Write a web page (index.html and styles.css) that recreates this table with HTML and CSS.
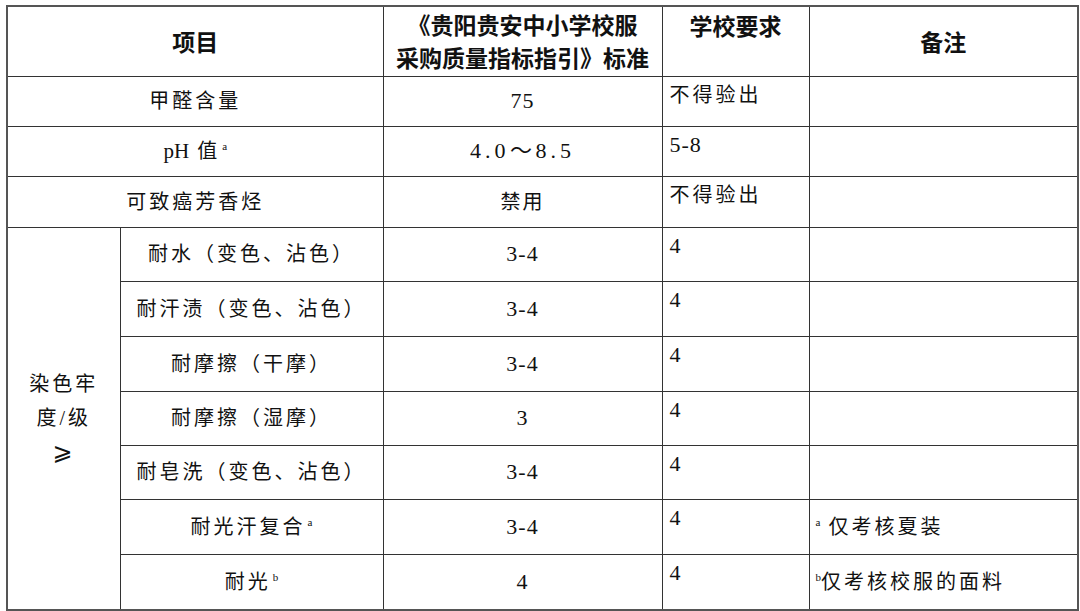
FILE: index.html
```html
<!DOCTYPE html>
<html lang="zh-CN">
<head>
<meta charset="utf-8">
<title>校服采购质量指标</title>
<link rel="stylesheet" href="styles.css">
</head>
<body>
<div class="page">
<table class="spec">
  <colgroup>
    <col class="c-a"><col class="c-b"><col class="c-c"><col class="c-d"><col class="c-e">
  </colgroup>
  <thead>
    <tr class="r-head">
      <th colspan="2" class="h-item">项目</th>
      <th class="h-std">《贵阳贵安中小学校服<br>采购质量指标指引》标准</th>
      <th class="h-school">学校要求</th>
      <th class="h-note">备注</th>
    </tr>
  </thead>
  <tbody>
    <tr class="r-50">
      <td colspan="2" class="item">甲醛含量</td>
      <td class="std"><span class="num">75</span></td>
      <td class="school">不得验出</td>
      <td class="note"></td>
    </tr>
    <tr class="r-50">
      <td colspan="2" class="item"><span class="num">pH</span> 值<sup class="mark">a</sup></td>
      <td class="std"><span class="num wide">4.0～8.5</span></td>
      <td class="school"><span class="num">5-8</span></td>
      <td class="note"></td>
    </tr>
    <tr class="r-51">
      <td colspan="2" class="item">可致癌芳香烃</td>
      <td class="std">禁用</td>
      <td class="school">不得验出</td>
      <td class="note"></td>
    </tr>
    <tr class="r-54">
      <td rowspan="7" class="group">染色牢<br>度/级<br><span class="ge">⩾</span></td>
      <td class="item">耐水（变色、沾色）</td>
      <td class="std"><span class="num">3-4</span></td>
      <td class="school"><span class="num">4</span></td>
      <td class="note"></td>
    </tr>
    <tr class="r-55">
      <td class="item">耐汗渍（变色、沾色）</td>
      <td class="std"><span class="num">3-4</span></td>
      <td class="school"><span class="num">4</span></td>
      <td class="note"></td>
    </tr>
    <tr class="r-55">
      <td class="item">耐摩擦（干摩）</td>
      <td class="std"><span class="num">3-4</span></td>
      <td class="school"><span class="num">4</span></td>
      <td class="note"></td>
    </tr>
    <tr class="r-54">
      <td class="item">耐摩擦（湿摩）</td>
      <td class="std"><span class="num">3</span></td>
      <td class="school"><span class="num">4</span></td>
      <td class="note"></td>
    </tr>
    <tr class="r-54">
      <td class="item">耐皂洗（变色、沾色）</td>
      <td class="std"><span class="num">3-4</span></td>
      <td class="school"><span class="num">4</span></td>
      <td class="note"></td>
    </tr>
    <tr class="r-55">
      <td class="item">耐光汗复合<sup class="mark">a</sup></td>
      <td class="std"><span class="num">3-4</span></td>
      <td class="school"><span class="num">4</span></td>
      <td class="note"><sup class="mark">a</sup> 仅考核夏装</td>
    </tr>
    <tr class="r-56">
      <td class="item">耐光<sup class="mark">b</sup></td>
      <td class="std"><span class="num">4</span></td>
      <td class="school"><span class="num">4</span></td>
      <td class="note"><sup class="mark">b</sup>仅考核校服的面料</td>
    </tr>
  </tbody>
</table>
</div>
</body>
</html>
```
FILE: styles.css
```css
html, body {
  margin: 0;
  padding: 0;
  background: #ffffff;
}

.page {
  padding: 5px 0 0 6px;
}

.spec {
  border-collapse: collapse;
  table-layout: fixed;
  width: 1071px;
  border: 2px solid #555;
  font-family: "Liberation Serif", "Noto Sans CJK SC", serif;
  font-size: 20px;
  line-height: 24px;
  color: #111;
}

.c-a { width: 113px; }
.c-b { width: 263px; }
.c-c { width: 279px; }
.c-d { width: 147px; }
.c-e { width: 269px; }

.spec th,
.spec td {
  border: 1px solid #333;
  padding: 0;
  overflow: hidden;
  white-space: nowrap;
}

.spec th {
  font-family: "Noto Sans CJK SC", sans-serif;
  font-weight: 700;
  font-size: 23px;
  line-height: 33px;
  color: #111;
  text-align: center;
  vertical-align: middle;
}

.h-std { letter-spacing: 0; }

.spec th.h-school {
  vertical-align: top;
  padding-top: 2px;
}

.r-head { height: 70px; }
.r-50 { height: 50px; }
.r-51 { height: 51px; }
.r-54 { height: 54px; }
.r-55 { height: 55px; }
.r-56 { height: 56px; }

.item {
  text-align: center;
  vertical-align: middle;
  letter-spacing: 3px;
}

.std {
  text-align: center;
  vertical-align: middle;
  letter-spacing: 2px;
}

.num {
  font-family: "Liberation Serif", serif;
  font-size: 22px;
  letter-spacing: 1px;
}

.item .num { font-size: 21px; letter-spacing: 0; }

.num.wide { letter-spacing: 4px; }

.spec td.school {
  text-align: left;
  vertical-align: top;
  padding: 6px 0 0 7px;
  letter-spacing: 3px;
}

.spec td.school .num { letter-spacing: 1px; }

.spec td.note {
  text-align: left;
  vertical-align: middle;
  padding-left: 4px;
  letter-spacing: 3px;
}

.spec td.group {
  text-align: center;
  vertical-align: middle;
  line-height: 34px;
  letter-spacing: 3px;
}

.ge {
  font-family: "DejaVu Sans", "Noto Sans CJK SC", sans-serif;
  font-size: 24px;
}

.mark {
  font-family: "Liberation Serif", serif;
  font-size: 11px;
  line-height: 0;
  vertical-align: 8px;
  letter-spacing: 0;
  margin-left: 2px;
}
```
